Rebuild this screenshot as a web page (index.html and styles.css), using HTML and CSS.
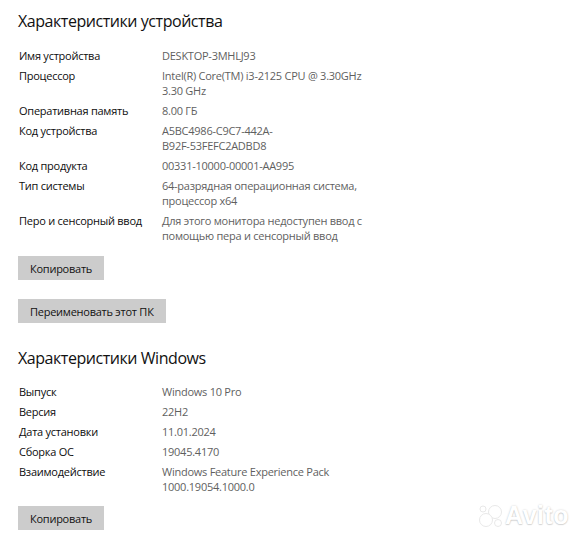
FILE: index.html
```html
<!DOCTYPE html>
<html lang="ru">
<head>
<meta charset="utf-8">
<link rel="stylesheet" href="styles.css">
</head>
<body>
<main class="page">
  <section class="section">
    <h2 class="title">Характеристики устройства</h2>
    <dl class="specs">
      <dt>Имя устройства</dt><dd>DESKTOP-3MHLJ93</dd>
      <dt>Процессор</dt><dd>Intel(R) Core(TM) i3-2125 CPU @ 3.30GHz<br>3.30 GHz</dd>
      <dt>Оперативная память</dt><dd>8.00 ГБ</dd>
      <dt>Код устройства</dt><dd>A5BC4986-C9C7-442A-<br>B92F-53FEFC2ADBD8</dd>
      <dt>Код продукта</dt><dd>00331-10000-00001-AA995</dd>
      <dt>Тип системы</dt><dd>64-разрядная операционная система,<br>процессор x64</dd>
      <dt>Перо и сенсорный ввод</dt><dd>Для этого монитора недоступен ввод с<br>помощью пера и сенсорный ввод</dd>
    </dl>
    <div class="actions">
      <button class="btn">Копировать</button>
      <button class="btn">Переименовать этот ПК</button>
    </div>
  </section>
  <section class="section second">
    <h2 class="title">Характеристики Windows</h2>
    <dl class="specs">
      <dt>Выпуск</dt><dd>Windows 10 Pro</dd>
      <dt>Версия</dt><dd>22H2</dd>
      <dt>Дата установки</dt><dd>11.01.2024</dd>
      <dt>Сборка ОС</dt><dd>19045.4170</dd>
      <dt>Взаимодействие</dt><dd>Windows Feature Experience Pack<br>1000.19054.1000.0</dd>
    </dl>
    <div class="actions">
      <button class="btn">Копировать</button>
    </div>
  </section>
</main>
<div class="watermark">
  <svg class="wm-dots" width="26" height="24" viewBox="0 0 26 24">
    <circle cx="17" cy="8" r="6.5"/>
    <circle cx="8" cy="16" r="6.5"/>
    <circle cx="20" cy="19" r="3.5"/>
    <circle cx="5" cy="5" r="3"/>
  </svg>
  <span class="wm-text">Avito</span>
</div>
</body>
</html>
```
FILE: styles.css
```css
html, body {
  margin: 0;
  padding: 0;
  background: #ffffff;
}
body {
  font-family: "Open Sans", "Noto Sans", sans-serif;
  color: #1a1a1a;
  width: 581px;
  height: 540px;
  overflow: hidden;
  position: relative;
}
.page {
  padding: 8px 0 0 19px;
}
.title {
  font-size: 16px;
  font-weight: 400;
  letter-spacing: -0.45px;
  line-height: 26px;
  margin: 0 0 0 -1px;
  color: #111;
}
.specs {
  display: grid;
  grid-template-columns: 143px 1fr;
  row-gap: 5px;
  margin: 14px 0 0;
  font-size: 11px;
  letter-spacing: -0.25px;
  line-height: 15px;
}
.specs dt {
  margin: 0;
  color: #0d0d0d;
}
.specs dd {
  margin: 0;
  color: #5f5f5f;
}
.actions {
  display: flex;
  flex-direction: column;
  align-items: flex-start;
  gap: 19px;
  margin-top: 13px;
}
.btn {
  font-family: inherit;
  font-size: 11px;
  letter-spacing: -0.25px;
  color: #111;
  background: #cccccc;
  border: 0;
  height: 24px;
  padding: 0 12px;
  margin: 0 0 0 -1px;
}
.second {
  margin-top: 22px;
}
.second .specs {
  margin-top: 13px;
}
.second .actions {
  margin-top: 12px;
}
.watermark {
  position: absolute;
  left: 478px;
  top: 501px;
  display: flex;
  align-items: center;
  gap: 1px;
}
.wm-dots circle {
  fill: #ffffff;
  stroke: #e2e2e2;
  stroke-width: 0.8;
}
.wm-text {
  font-family: "Liberation Sans", sans-serif;
  font-size: 25px;
  font-weight: 700;
  letter-spacing: 0.5px;
  color: #ffffff;
  text-shadow: 0 0 2px rgba(0,0,0,0.2), 0 1px 1px rgba(0,0,0,0.12);
}
```
